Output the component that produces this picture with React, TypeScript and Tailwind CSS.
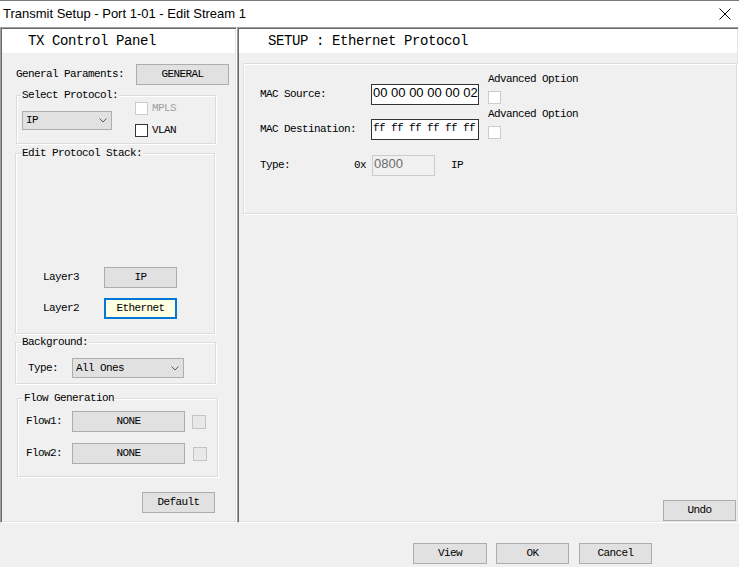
const mono = "font-['Liberation_Mono',monospace] text-[11px] leading-[13px] tracking-[-0.6px] text-black";
const head = "font-['Liberation_Mono',monospace] text-[14px] leading-[18px] tracking-[-0.4px] text-black";
const btn =
  "h-[21px] shrink-0 bg-[#e1e1e1] border border-[#adadad] flex items-center justify-center font-['Liberation_Mono',monospace] text-[11px] leading-[13px] tracking-[-0.6px] text-black";
const group = 'border border-[#dcdcdc] shadow-[1px_1px_0_#fff,inset_1px_1px_0_#fff]';
const sunken =
  'border border-t-[#a0a0a0] border-l-[#a0a0a0] border-r-white border-b-white p-px shadow-[inset_1px_1px_0_#696969,inset_-1px_-1px_0_#e3e3e3]';
const legend = "w-fit px-px bg-[#f0f0f0] -mt-[7px] font-['Liberation_Mono',monospace] text-[11px] leading-[13px] tracking-[-0.6px] text-black";

function Chevron() {
  return (
    <svg width="8" height="5" viewBox="0 0 8 5" className="shrink-0">
      <path d="M0.5 0.5 L4 4 L7.5 0.5" fill="none" stroke="#5a5a5a" strokeWidth="1" />
    </svg>
  );
}

function Select({ value, className }: { value: string; className: string }) {
  return (
    <div className={`bg-[#e1e1e1] border border-[#adadad] flex items-center justify-between pl-[3px] pr-[4px] ${className}`}>
      <span className={mono}>{value}</span>
      <Chevron />
    </div>
  );
}

function Check({ label, disabled }: { label: string; disabled?: boolean }) {
  return (
    <div className="flex items-center gap-[4px] h-[13px]">
      <span
        className={`w-[13px] h-[13px] shrink-0 bg-white border ${disabled ? 'border-[#cccccc]' : 'border-[#333333]'}`}
      />
      <span className={`${mono} ${disabled ? '!text-[#a0a0a0]' : ''}`}>{label}</span>
    </div>
  );
}

function LeftPanel() {
  return (
    <div className={`w-[237px] h-full flex flex-col ${sunken}`}>
      <div className="h-[24px] bg-white flex items-center pl-[26px]">
        <span className={head}>TX Control Panel</span>
      </div>

      <div className="mt-[11px] h-[21px] flex items-center">
        <span className={`ml-[14px] w-[120px] ${mono}`}>General Paraments:</span>
        <div className={`w-[93px] ${btn}`}>GENERAL</div>
      </div>

      <div className={`mt-[10px] ml-[14px] w-[200px] h-[49px] ${group}`}>
        <div className={`ml-[4px] ${legend}`}>Select Protocol:</div>
        <div className="flex">
          <Select value="IP" className="mt-[9px] ml-[5px] w-[90px] h-[19px]" />
          <div className="ml-[23px] flex flex-col gap-[9px]">
            <Check label="MPLS" disabled />
            <Check label="VLAN" />
          </div>
        </div>
      </div>

      <div className={`mt-[9px] ml-[13px] w-[200px] h-[181px] flex flex-col ${group}`}>
        <div className={`ml-[5px] ${legend}`}>Edit Protocol Stack:</div>
        <div className="flex-1" />
        <div className="flex items-center">
          <span className={`ml-[27px] w-[61px] ${mono}`}>Layer3</span>
          <div className={`w-[73px] ${btn}`}>IP</div>
        </div>
        <div className="mt-[10px] mb-[14px] flex items-center">
          <span className={`ml-[27px] w-[61px] ${mono}`}>Layer2</span>
          <div className={`w-[73px] ${btn} !border-2 !border-[#0078d7] !bg-[#ffffe1]`}>Ethernet</div>
        </div>
      </div>

      <div className={`mt-[8px] ml-[13px] w-[201px] h-[42px] ${group}`}>
        <div className={`ml-[5px] ${legend}`}>Background:</div>
        <div className="mt-[9px] flex items-center">
          <span className={`ml-[12px] w-[44px] ${mono}`}>Type:</span>
          <Select value="All Ones" className="w-[112px] h-[20px]" />
        </div>
      </div>

      <div className={`mt-[14px] ml-[15px] w-[201px] h-[79px] ${group}`}>
        <div className={`ml-[5px] ${legend}`}>Flow Generation</div>
        <div className="mt-[6px] flex items-center">
          <span className={`ml-[8px] w-[46px] ${mono}`}>Flow1:</span>
          <div className={`w-[113px] ${btn}`}>NONE</div>
          <span className="ml-[7px] w-[14px] h-[14px] border border-[#c4c4c4] bg-[#e8e8e8]" />
        </div>
        <div className="mt-[11px] flex items-center">
          <span className={`ml-[8px] w-[46px] ${mono}`}>Flow2:</span>
          <div className={`w-[113px] ${btn}`}>NONE</div>
          <span className="ml-[8px] w-[14px] h-[14px] border border-[#c4c4c4] bg-[#e8e8e8]" />
        </div>
      </div>

      <div className={`mt-[15px] ml-[140px] w-[73px] ${btn}`}>Default</div>
    </div>
  );
}

function Advanced() {
  return (
    <div className="ml-[9px] mb-px flex flex-col">
      <span className={mono}>Advanced Option</span>
      <span className="mt-[5px] w-[13px] h-[13px] bg-white border border-[#cccccc]" />
    </div>
  );
}

function RightPanel() {
  return (
    <div className={`flex-1 h-full flex flex-col ${sunken}`}>
      <div className="h-[24px] bg-white flex items-center pl-[29px]">
        <span className={head}>SETUP : Ethernet Protocol</span>
      </div>

      <div className={`mt-[10px] ml-[4px] h-[151px] flex flex-col ${group}`}>
        <div className="mt-[9px] flex items-end">
          <div className="flex items-center">
            <span className={`ml-[16px] w-[111px] ${mono}`}>MAC Source:</span>
            <div className="w-[108px] h-[21px] bg-white border border-[#333333] pl-px font-['Liberation_Sans',Arial,sans-serif] text-[13px] leading-[16px] text-black">
              00 00 00 00 00 02
            </div>
          </div>
          <Advanced />
        </div>
        <div className="mt-[3px] flex items-end">
          <div className="flex items-center">
            <span className={`ml-[16px] w-[111px] ${mono}`}>MAC Destination:</span>
            <div className={`w-[108px] h-[21px] bg-white border border-[#333333] pl-px pt-[2px] ${mono}`}>
              ff ff ff ff ff ff
            </div>
          </div>
          <Advanced />
        </div>
        <div className="mt-[15px] flex items-center">
          <span className={`ml-[16px] w-[94px] ${mono}`}>Type:</span>
          <span className={`w-[18px] ${mono}`}>0x</span>
          <div className="w-[63px] h-[21px] bg-[#f0f0f0] border border-[#cccccc] pl-px font-['Liberation_Sans',Arial,sans-serif] text-[13px] leading-[15px] text-[#6d6d6d]">
            0800
          </div>
          <span className={`ml-[16px] ${mono}`}>IP</span>
        </div>
      </div>

      <div className="flex-1" />
      <div className="flex justify-end pr-px">
        <div className={`w-[73px] ${btn}`}>Undo</div>
      </div>
    </div>
  );
}

export default function App() {
  return (
    <div className="w-[739px] h-[567px] bg-[#f0f0f0] flex flex-col overflow-hidden">
      <div className="h-[27px] shrink-0 bg-white border-t border-[#7a7a7a] flex items-center justify-between">
        <span className="pl-[3px] font-['Liberation_Sans',Arial,sans-serif] text-[13px] leading-[16px] text-black">
          Transmit Setup - Port 1-01 - Edit Stream 1
        </span>
        <svg width="12" height="12" viewBox="0 0 12 12" className="mr-[8px]">
          <path d="M0.5 0.5 L11.5 11.5 M11.5 0.5 L0.5 11.5" stroke="#000" strokeWidth="1" />
        </svg>
      </div>

      <div className="h-[496px] shrink-0 flex">
        <LeftPanel />
        <RightPanel />
      </div>

      <div className="flex-1 flex items-start pt-[20px]">
        <div className={`ml-[413px] w-[74px] ${btn}`}>View</div>
        <div className={`ml-[9px] w-[73px] ${btn}`}>OK</div>
        <div className={`ml-[10px] w-[73px] ${btn}`}>Cancel</div>
      </div>
    </div>
  );
}
